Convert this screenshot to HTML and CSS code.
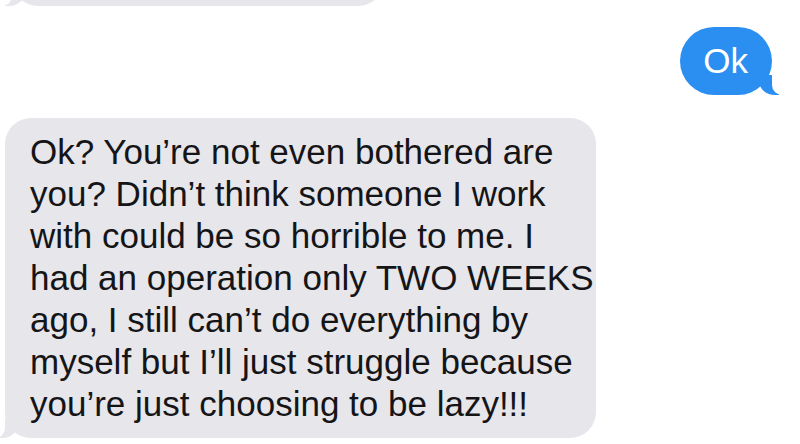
FILE: index.html
```html
<!DOCTYPE html>
<html lang="en">
<head>
<meta charset="utf-8">
<title>Messages</title>
<link rel="stylesheet" href="styles.css">
</head>
<body>
<div class="thread">
  <div class="msg msg-in msg-prev"></div>
  <div class="row row-out">
    <div class="msg msg-out">Ok</div>
  </div>
  <div class="row row-in">
    <div class="msg msg-in msg-long">Ok? You’re not even bothered are<br>you? Didn’t think someone I work<br>with could be so horrible to me. I<br>had an operation only TWO WEEKS<br>ago, I still can’t do everything by<br>myself but I’ll just struggle because<br>you’re just choosing to be lazy!!!</div>
  </div>
</div>
</body>
</html>
```

FILE: styles.css
```css
html, body {
  margin: 0;
  padding: 0;
  background: #ffffff;
  overflow: hidden;
}

.thread {
  width: 800px;
  height: 444px;
  overflow: hidden;
  font-family: "Liberation Sans", Arial, sans-serif;
  font-size: 35px;
  line-height: 42px;
  display: flex;
  flex-direction: column;
}

.row {
  display: flex;
}

.row-out {
  justify-content: flex-end;
  margin-top: 21px;
  padding-right: 28px;
}

.row-in {
  justify-content: flex-start;
  margin-top: 23px;
  padding-left: 5px;
}

.msg {
  position: relative;
  border-radius: 26px;
  white-space: nowrap;
}

.msg::before,
.msg::after {
  content: "";
  position: absolute;
  bottom: 0;
  height: 20px;
}

.msg-out {
  background: #2b8ef1;
  color: #ffffff;
  padding: 13px 24px 13px 23px;
  border-radius: 34px;
}

.msg-out::before {
  right: -7px;
  width: 20px;
  background: #2b8ef1;
  border-bottom-left-radius: 16px 14px;
}

.msg-out::after {
  right: -26px;
  width: 26px;
  background: #ffffff;
  border-bottom-left-radius: 10px;
}

.msg-in {
  background: #e6e6eb;
  color: #151517;
}

.msg-in::before {
  left: -7px;
  width: 20px;
  background: #e6e6eb;
  border-bottom-right-radius: 16px 14px;
}

.msg-in::after {
  left: -26px;
  width: 26px;
  background: #ffffff;
  border-bottom-right-radius: 10px;
}

.msg-long {
  width: 566px;
  padding: 13px 0 13px 25px;
}

.msg-prev {
  width: 372px;
  height: 60px;
  margin-top: -54px;
  margin-left: 12px;
  flex: none;
}
```
